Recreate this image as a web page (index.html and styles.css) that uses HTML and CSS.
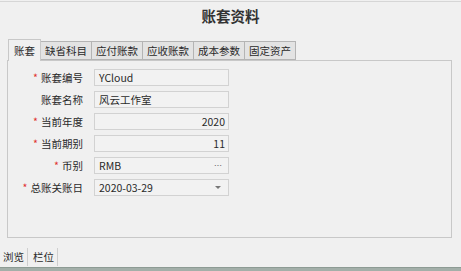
FILE: index.html
```html
<!DOCTYPE html>
<html lang="zh-CN">
<head>
    <meta charset="UTF-8">
    <title>账套资料</title>
    <link rel="stylesheet" href="styles.css">
</head>
<body>
    <div class="topline"></div>
    <h1 class="title">账套资料</h1>

    <div class="tabs">
        <div class="tab active">账套</div>
        <div class="tab">缺省科目</div>
        <div class="tab">应付账款</div>
        <div class="tab">应收账款</div>
        <div class="tab">成本参数</div>
        <div class="tab">固定资产</div>
    </div>

    <div class="panel">
        <div class="form">
            <label class="req">账套编号</label>
            <div class="field">YCloud</div>
            <label>账套名称</label>
            <div class="field">风云工作室</div>
            <label class="req">当前年度</label>
            <div class="field num">2020</div>
            <label class="req">当前期别</label>
            <div class="field num">11</div>
            <label class="req">币别</label>
            <div class="field btn"><span>RMB</span><span class="dots">…</span></div>
            <label class="req">总账关账日</label>
            <div class="field btn"><span>2020-03-29</span><span class="caret"></span></div>
        </div>
    </div>

    <div class="status">
        <span class="item">浏览</span>
        <span class="item">栏位</span>
    </div>
    <div class="bottombar"></div>
</body>
</html>
```

FILE: styles.css
```css
*{
    margin: 0;
    padding: 0;
    box-sizing: border-box;
}
body{
    background-color: #f0f0f0;
    font-family: "Noto Sans CJK SC", "Noto Sans", sans-serif;
    font-size: 10.5px;
    color: #2a2a2a;
    width: 461px;
    height: 271px;
    overflow: hidden;
    display: flex;
    flex-direction: column;
}
.topline{
    height: 2px;
    border-bottom: 1px solid #d6d6d6;
}
.title{
    height: 37px;
    font-size: 14.5px;
    font-weight: bold;
    color: #333;
    text-align: center;
    line-height: 28px;
}
.tabs{
    display: flex;
    align-items: flex-end;
    height: 21px;
    padding-left: 8px;
    position: relative;
    z-index: 1;
}
.tab{
    height: 19px;
    line-height: 17px;
    padding: 0 4px;
    border: 1px solid #b4b4b4;
    border-left: none;
    background-color: #e3e3e3;
}
.tab.active{
    height: 22px;
    line-height: 21px;
    margin-bottom: -1px;
    padding: 0 5px;
    border-left: 1px solid #c8c8c8;
    border-color: #c8c8c8;
    border-bottom: none;
    background-color: #f0f0f0;
}
.panel{
    margin: 0 9px 0 7px;
    height: 178px;
    border: 1px solid #c8c8c8;
    padding: 8px 0 0 0;
}
.form{
    display: grid;
    grid-template-columns: 75px 135px;
    grid-auto-rows: 17px;
    column-gap: 11px;
    row-gap: 5px;
}
.form label{
    text-align: right;
    line-height: 17px;
    white-space: nowrap;
}
.form label.req::before{
    content: "*";
    color: #e03030;
    margin-right: 3px;
}
.field{
    border: 1px solid #d2d2d2;
    background-color: #f2f2f2;
    line-height: 15px;
    padding: 0 4px;
    white-space: nowrap;
}
.field.num{
    text-align: right;
    padding-right: 3px;
}
.field.btn{
    display: flex;
    justify-content: space-between;
    align-items: center;
}
.dots{
    color: #666;
    font-size: 8px;
    margin-right: 2px;
}
.caret{
    width: 0;
    height: 0;
    border-left: 3px solid transparent;
    border-right: 3px solid transparent;
    border-top: 3px solid #777;
    margin-right: 3px;
}
.status{
    flex: 1;
    display: flex;
    align-items: center;
    padding: 8px 0 0 2px;
}
.status .item{
    padding: 0 3px 0 1px;
    border-right: 1px solid #cfcfcf;
    line-height: 18px;
    margin-right: 4px;
}
.bottombar{
    height: 4px;
    background-color: #a3afa9;
    border-top: 1px solid #8d9b94;
}
```
